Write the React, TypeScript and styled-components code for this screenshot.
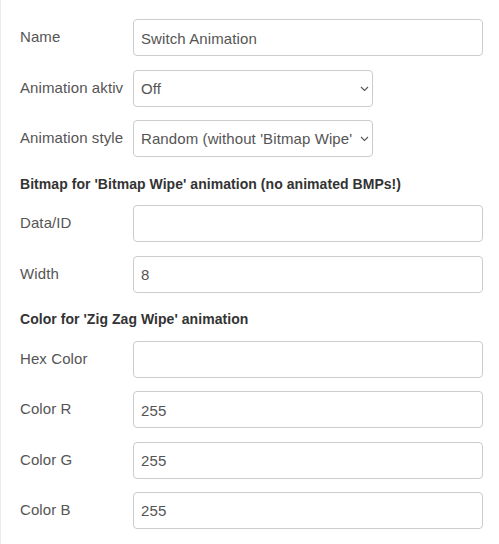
import React from 'react';
import styled, { createGlobalStyle } from 'styled-components';

const GlobalStyle = createGlobalStyle`
  html, body {
    margin: 0;
    padding: 0;
    background: #fff;
  }
  body {
    font-family: "Liberation Sans", Arial, sans-serif;
  }
`;

const Panel = styled.form`
  box-sizing: border-box;
  width: 499px;
  min-height: 544px;
  padding: 19.33px 16px 0 19px;
  border-left: 1px solid #ececec;
`;

const Row = styled.div`
  display: flex;
  align-items: flex-start;
  margin-bottom: 13.33px;
`;

const Label = styled.label`
  flex: 0 0 113px;
  padding-top: 7px;
  font-size: 15px;
  line-height: 21px;
  letter-spacing: 0.1px;
  color: #555;
  white-space: nowrap;
`;

const Field = styled.div<{ $width?: number }>`
  position: relative;
  flex: ${(p) => (p.$width ? `0 0 ${p.$width}px` : '1 1 auto')};
  min-width: 0;
`;

const TextInput = styled.input`
  box-sizing: border-box;
  display: block;
  width: 100%;
  height: 37px;
  margin: 0;
  padding: 1px 7px 0;
  border: 1px solid #ccc;
  border-radius: 4px;
  background: #fff;
  font-family: "Liberation Sans", Arial, sans-serif;
  font-size: 15px;
  letter-spacing: 0.1px;
  color: #555;
  outline: none;
`;

const Select = styled.select`
  box-sizing: border-box;
  display: block;
  width: 100%;
  height: 37px;
  margin: 0;
  padding: 1px 20px 0 7px;
  border: 1px solid #ccc;
  border-radius: 4px;
  background: #fff;
  font-family: "Liberation Sans", Arial, sans-serif;
  font-size: 15px;
  letter-spacing: 0.1px;
  color: #555;
  appearance: none;
  -webkit-appearance: none;
  outline: none;
  text-overflow: clip;
`;

const Chevron = styled.svg`
  position: absolute;
  right: 4px;
  top: 16px;
  width: 9px;
  height: 6px;
  pointer-events: none;
`;

const SectionTitle = styled.div<{ $gap?: number }>`
  padding-top: ${(p) => p.$gap ?? 4}px;
  margin-bottom: ${(p) => 15 - (p.$gap ?? 4)}px;
  font-size: 14px;
  line-height: 20px;
  letter-spacing: 0.05px;
  font-weight: bold;
  color: #333;
  white-space: nowrap;
`;

function TextRow({ label, value }: { label: string; value?: string }) {
  return (
    <Row>
      <Label>{label}</Label>
      <Field>
        <TextInput type="text" defaultValue={value ?? ''} />
      </Field>
    </Row>
  );
}

function SelectRow({ label, options }: { label: string; options: string[] }) {
  return (
    <Row>
      <Label>{label}</Label>
      <Field $width={240}>
        <Select defaultValue={options[0]}>
          {options.map((o) => (
            <option key={o}>{o}</option>
          ))}
        </Select>
        <Chevron viewBox="0 0 9 6">
          <path d="M1 1l3.5 3.5L8 1" fill="none" stroke="#555" strokeWidth="1.1" />
        </Chevron>
      </Field>
    </Row>
  );
}

export default function App() {
  return (
    <>
      <GlobalStyle />
      <Panel onSubmit={(e) => e.preventDefault()}>
        <TextRow label="Name" value="Switch Animation" />
        <SelectRow label="Animation aktiv" options={['Off', 'On']} />
        <SelectRow
          label="Animation style"
          options={["Random (without 'Bitmap Wipe')", 'Bitmap Wipe', 'Zig Zag Wipe']}
        />
        <SectionTitle>Bitmap for 'Bitmap Wipe' animation (no animated BMPs!)</SectionTitle>
        <TextRow label="Data/ID" />
        <TextRow label="Width" value="8" />
        <SectionTitle $gap={3}>Color for 'Zig Zag Wipe' animation</SectionTitle>
        <TextRow label="Hex Color" />
        <TextRow label="Color R" value="255" />
        <TextRow label="Color G" value="255" />
        <TextRow label="Color B" value="255" />
      </Panel>
    </>
  );
}
